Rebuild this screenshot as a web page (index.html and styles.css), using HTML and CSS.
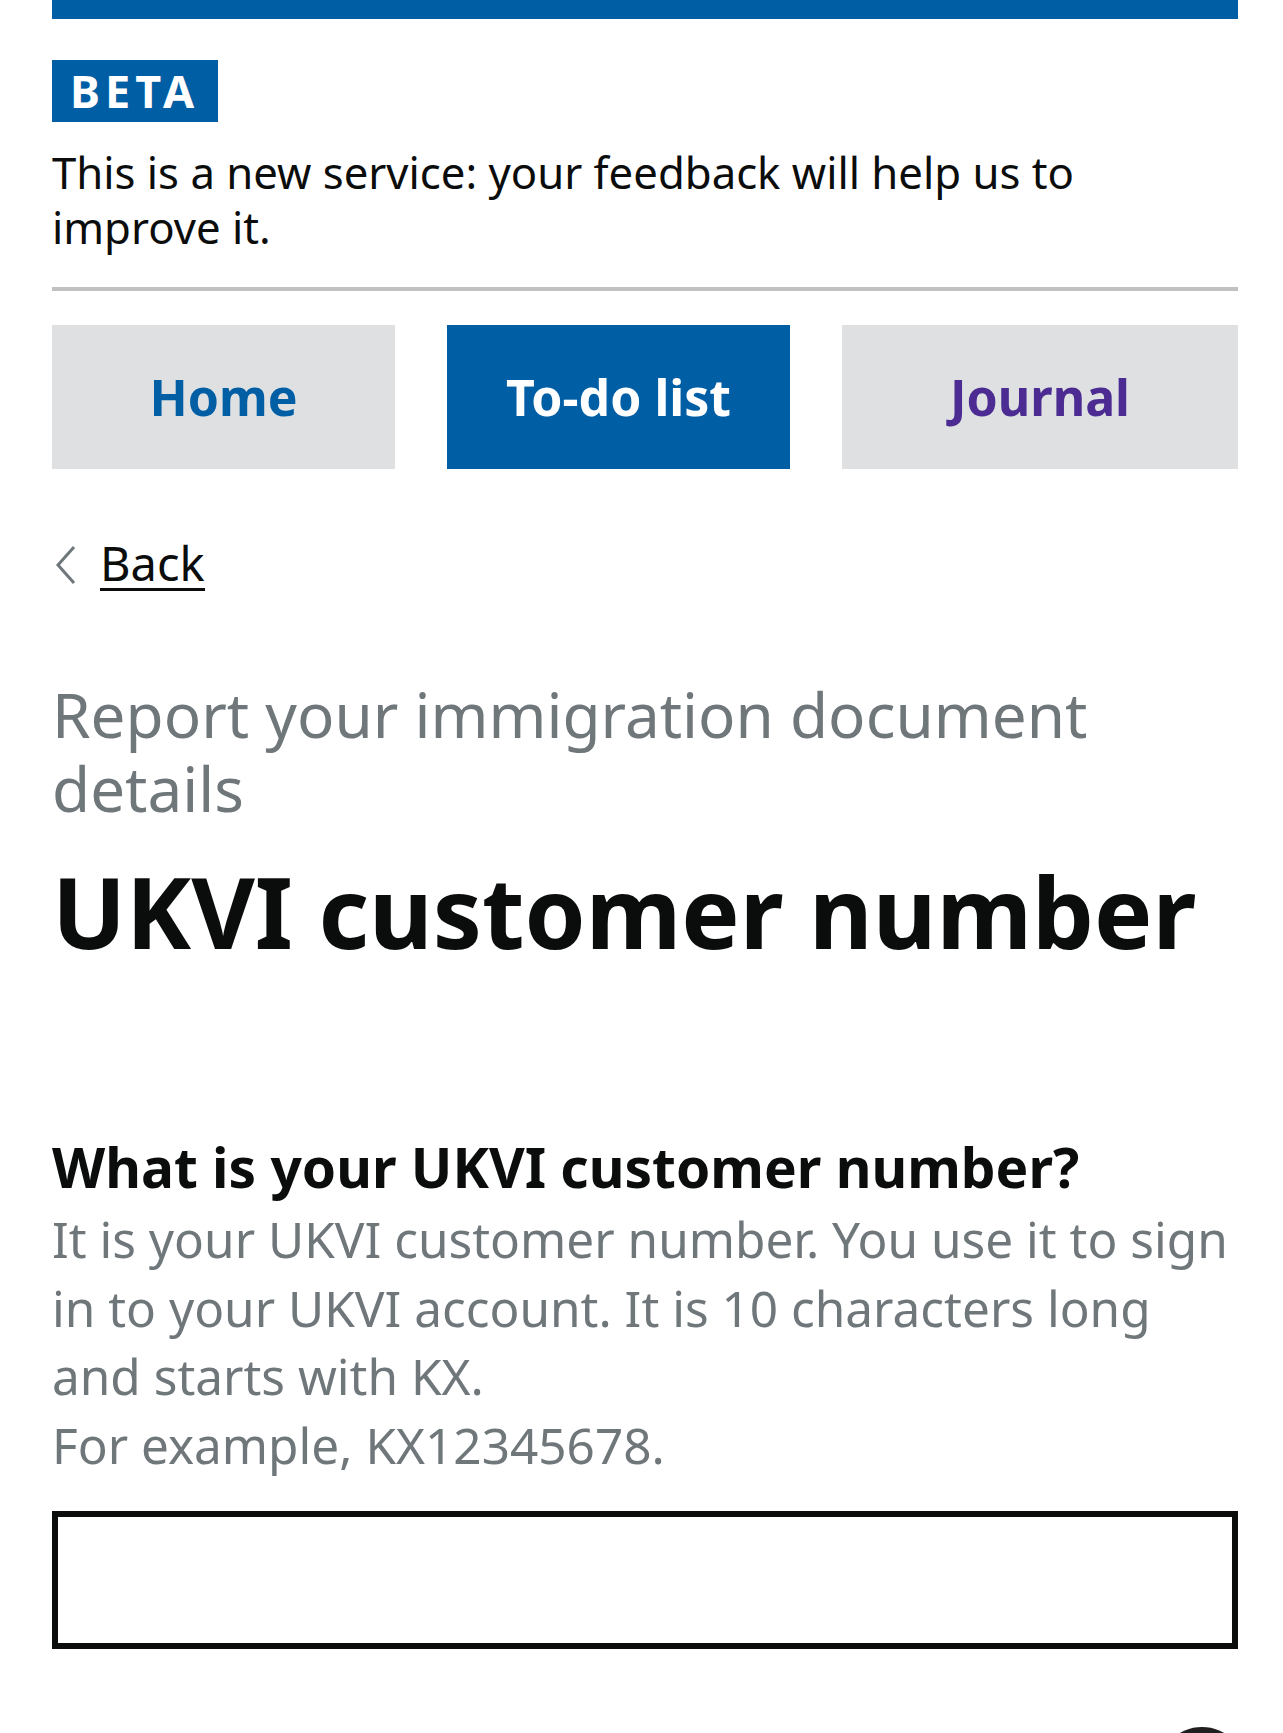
FILE: index.html
```html
<!DOCTYPE html>
<html lang="en">
<head>
<meta charset="utf-8">
<title>UKVI customer number</title>
<link rel="stylesheet" href="styles.css">
</head>
<body>
<div class="page">
  <div class="topbar"></div>
  <div class="phase">
    <strong class="tag">BETA</strong>
    <p class="phase-text">This is a new service: your feedback will help us to improve it.</p>
  </div>
  <nav class="tabs">
    <a class="tab tab-link" href="#">Home</a>
    <a class="tab tab-current" href="#">To-do list</a>
    <a class="tab tab-visited" href="#">Journal</a>
  </nav>
  <a class="back" href="#"><svg class="back-icon" viewBox="0 0 26 42" width="26" height="42"><path d="M22 3 L6 21 L22 39" fill="none" stroke="#6f777b" stroke-width="3"/></svg><span class="back-text">Back</span></a>
  <main class="main">
    <span class="caption">Report your immigration document details</span>
    <h1 class="heading">UKVI customer number</h1>
    <label class="label" for="ukvi">What is your UKVI customer number?</label>
    <div class="hint">It is your UKVI customer number. You use it to sign in to your UKVI account. It is 10 characters long and starts with KX.<br>For example, KX12345678.</div>
    <input class="input" id="ukvi" type="text">
  </main>
</div>
<div class="fab"></div>
</body>
</html>
```
FILE: styles.css
```css
html, body {
  margin: 0;
  padding: 0;
  background: #ffffff;
}
body {
  font-family: "Noto Sans", "Liberation Sans", sans-serif;
  color: #0b0c0c;
  overflow: hidden;
}
.page {
  margin-left: 52px;
  width: 1186px;
}
.topbar {
  height: 19px;
  background: #005ea5;
}
.phase {
  padding-top: 41px;
  padding-bottom: 32px;
  border-bottom: 4px solid #bfc1c3;
}
.tag {
  display: block;
  width: 166px;
  height: 62px;
  box-sizing: border-box;
  padding-left: 18px;
  background: #005ea5;
  color: #ffffff;
  font-weight: 700;
  font-size: 45px;
  letter-spacing: 5px;
  line-height: 62px;
}
.phase-text {
  margin: 23px 0 0;
  max-width: 1100px;
  font-size: 43.7px;
  line-height: 55px;
}
.tabs {
  display: grid;
  grid-template-columns: 343px 343px 1fr;
  gap: 52px;
  margin-top: 34px;
}
.tab {
  height: 144px;
  display: flex;
  align-items: center;
  justify-content: center;
  background: #dee0e2;
  font-weight: 700;
  font-size: 50px;
  text-decoration: none;
}
.tab-link { color: #005ea5; }
.tab-current { background: #005ea5; color: #ffffff; }
.tab-visited { color: #4c2c92; }
.back {
  display: inline-flex;
  align-items: center;
  margin-top: 69px;
  color: #0b0c0c;
  text-decoration: none;
}
.back-icon {
  margin-right: 22px;
}
.back-text {
  font-size: 47px;
  line-height: 50px;
  border-bottom: 3px solid #0b0c0c;
}
.main {
  padding-top: 86px;
}
.caption {
  display: block;
  max-width: 1100px;
  color: #6f777b;
  font-size: 62px;
  line-height: 74px;
}
.heading {
  margin: 31px 0 0;
  font-size: 98px;
  line-height: 110px;
  font-weight: 700;
}
.label {
  display: block;
  margin-top: 169px;
  font-weight: 700;
  font-size: 55px;
  line-height: 64px;
}
.hint {
  margin-top: 6px;
  color: #6f777b;
  font-size: 49.5px;
  line-height: 68.5px;
}
.input {
  display: block;
  margin-top: 32px;
  width: 100%;
  height: 138px;
  box-sizing: border-box;
  border: 6px solid #0b0c0c;
  border-radius: 0;
  background: #fff;
  font-size: 40px;
  padding: 0 16px;
}
.fab {
  position: absolute;
  left: 1157px;
  top: 1727px;
  width: 90px;
  height: 90px;
  border-radius: 50%;
  background: #1f1f1f;
}
```
